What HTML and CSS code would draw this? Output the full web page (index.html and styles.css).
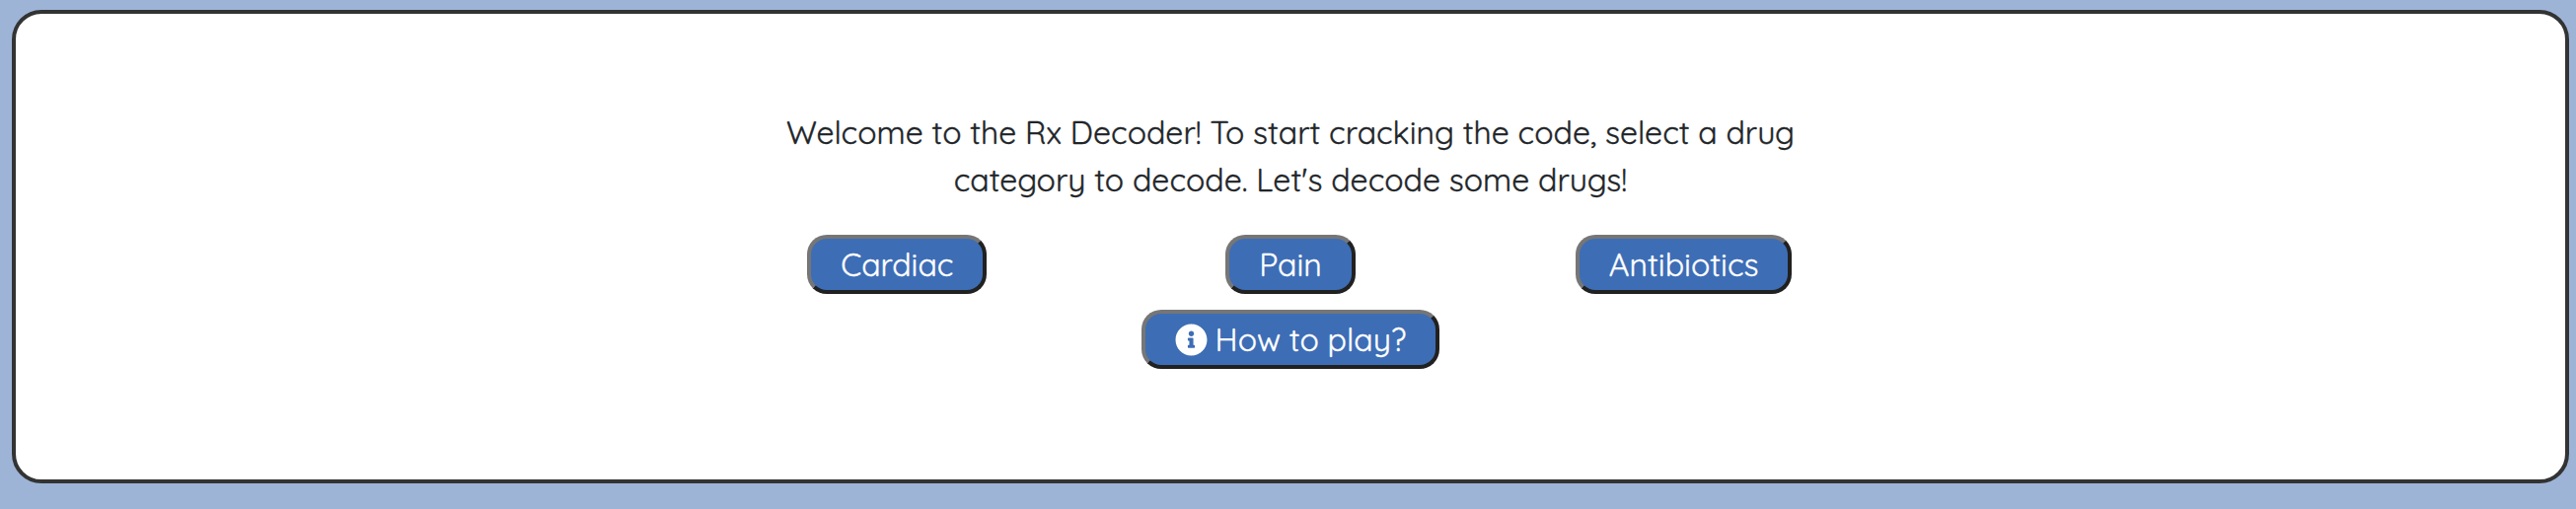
FILE: index.html
```
<!DOCTYPE html>
<html lang="en">
<head>
<meta charset="utf-8">
<title>Rx Decoder</title>
<link rel="stylesheet" href="styles.css">
</head>
<body>
<main class="card">
  <p class="intro">Welcome to the Rx Decoder! To start cracking the code, select a drug<br>category to decode. Let's decode some drugs!</p>
  <div class="categories">
    <button class="btn cardiac">Cardiac</button>
    <button class="btn pain">Pain</button>
    <button class="btn antibiotics">Antibiotics</button>
  </div>
  <button class="btn help"><svg class="icon" viewBox="0 0 512 512" aria-hidden="true"><path fill="currentColor" d="M256 8C119 8 8 119.100 8 256c0 137 111 248 248 248s248-111 248-248C504 119.100 393 8 256 8zm0 110c23.200 0 42 18.800 42 42s-18.800 42-42 42-42-18.800-42-42 18.800-42 42-42zm56 254c0 6.600-5.400 12-12 12h-88c-6.600 0-12-5.400-12-12v-24c0-6.600 5.400-12 12-12h12v-64h-12c-6.600 0-12-5.400-12-12v-24c0-6.600 5.400-12 12-12h64c6.600 0 12 5.400 12 12v100h12c6.600 0 12 5.400 12 12v24z"/></svg><span>How to play?</span></button>
</main>
</body>
</html>
```
FILE: styles.css
```
* { box-sizing: border-box; }
body {
  margin: 0;
  padding: 10px 7px 26px 12px;
  height: 516px;
  background: #9db4d7;
  color: #212529;
  font-family: Quicksand, Lato, sans-serif;
  font-size: 32px;
  -webkit-text-stroke: 0.35px currentColor;
}
.card {
  height: 480px;
  padding-top: 96px;
  display: flex;
  flex-direction: column;
  align-items: center;
  background: #fff;
  border: 4px solid #333;
  border-radius: 30px;
}
.intro {
  margin: 0;
  line-height: 48px;
  text-align: center;
  white-space: nowrap;
}
.categories {
  width: 1196px;
  margin: 32px 0 16px;
  display: grid;
  grid-template-columns: repeat(3, 1fr);
  justify-items: center;
}
.btn {
  height: 60px;
  padding: 0;
  display: flex;
  align-items: center;
  justify-content: center;
  color: #fff;
  background: #3d6db5;
  border: 4px solid;
  border-color: #767676 #212121 #212121 #767676;
  border-radius: 20px;
  font: inherit;
  line-height: 48px;
  white-space: nowrap;
}
.cardiac { width: 182px; }
.pain { width: 132px; }
.antibiotics { width: 219px; }
.help { width: 302px; gap: 8px; }
.icon { width: 33px; height: 33px; }
```
